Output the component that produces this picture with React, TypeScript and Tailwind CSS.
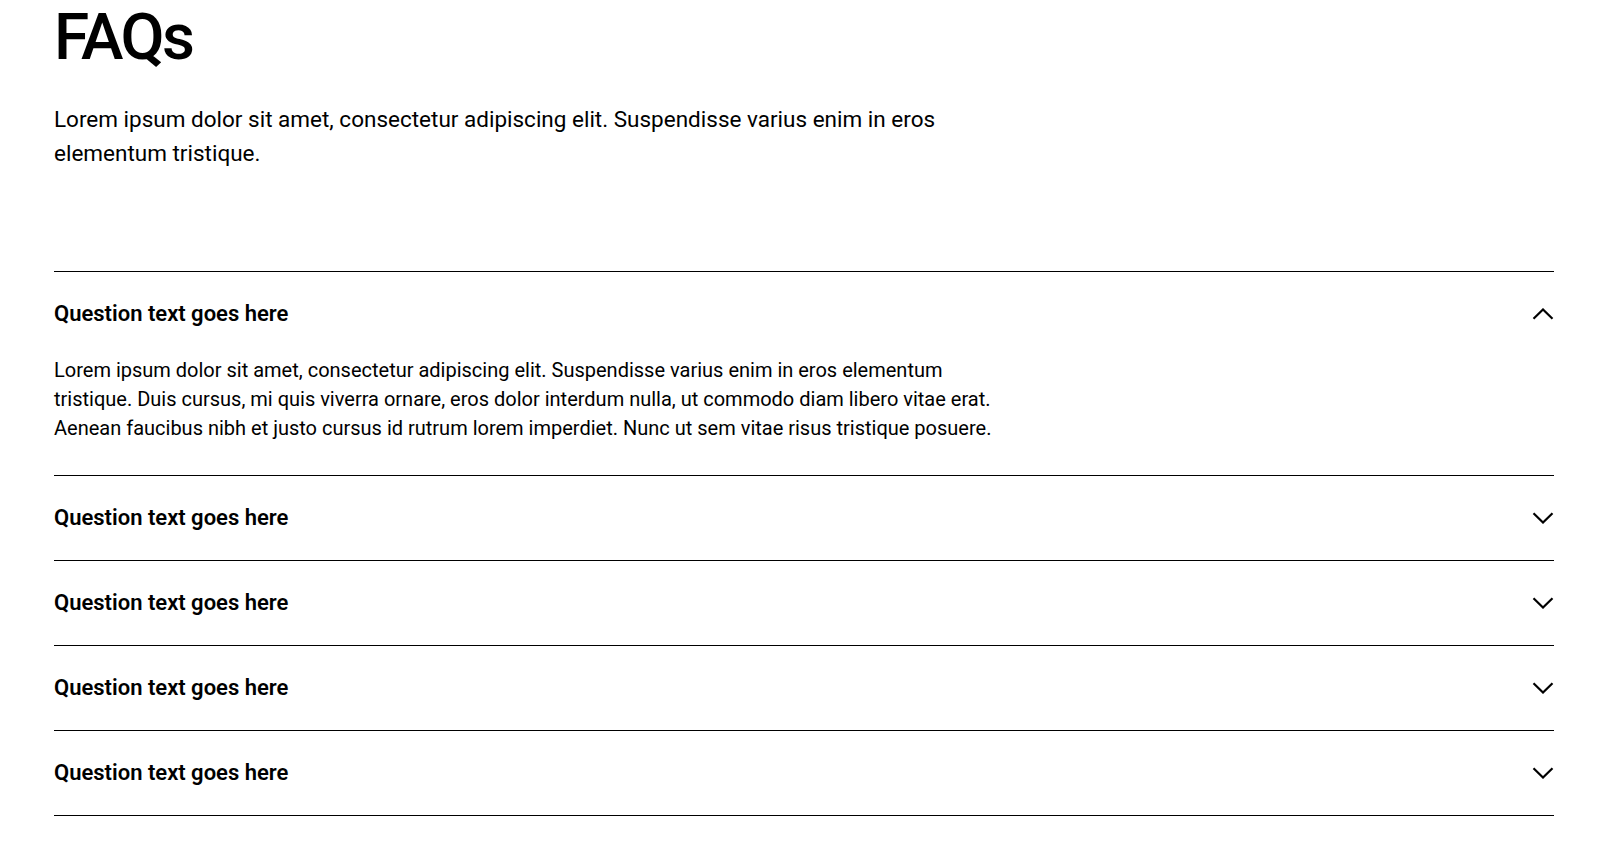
import React, { useState } from 'react';

const answer =
  'Lorem ipsum dolor sit amet, consectetur adipiscing elit. Suspendisse varius enim in eros elementum tristique. Duis cursus, mi quis viverra ornare, eros dolor interdum nulla, ut commodo diam libero vitae erat. Aenean faucibus nibh et justo cursus id rutrum lorem imperdiet. Nunc ut sem vitae risus tristique posuere.';

const Chevron: React.FC<{ open: boolean }> = ({ open }) => (
  <svg
    width="22"
    height="12"
    viewBox="0 0 22 12"
    fill="none"
    stroke="currentColor"
    strokeWidth="2.2"
    className={open ? 'rotate-180' : ''}
  >
    <polyline points="1.5,1.2 11,10.5 20.5,1.2" />
  </svg>
);

const FaqItem: React.FC<{ question: string; defaultOpen?: boolean }> = ({ question, defaultOpen = false }) => {
  const [open, setOpen] = useState(defaultOpen);
  return (
    <div className="border-t border-black">
      <button
        type="button"
        onClick={() => setOpen(!open)}
        className="flex h-[84px] w-full items-center justify-between text-left"
      >
        <span className="text-[22px] font-semibold">{question}</span>
        <Chevron open={open} />
      </button>
      {open && (
        <p className="max-w-[960px] pb-[32px] text-[20px] leading-[29px]">{answer}</p>
      )}
    </div>
  );
};

const App: React.FC = () => {
  return (
    <div className="min-h-screen bg-white text-black font-['Roboto',sans-serif]">
      <div className="ml-[54px] w-[1500px]">
        <h1 className="text-[64px] font-medium leading-[1.2] tracking-[-0.04em]">FAQs</h1>
        <p className="mt-[25px] max-w-[960px] text-[22.5px] leading-[34px]">
          Lorem ipsum dolor sit amet, consectetur adipiscing elit. Suspendisse varius enim in eros elementum tristique.
        </p>
        <div className="mt-[101px] border-b border-black">
          <FaqItem question="Question text goes here" defaultOpen />
          <FaqItem question="Question text goes here" />
          <FaqItem question="Question text goes here" />
          <FaqItem question="Question text goes here" />
          <FaqItem question="Question text goes here" />
        </div>
      </div>
    </div>
  );
};

export default App;
